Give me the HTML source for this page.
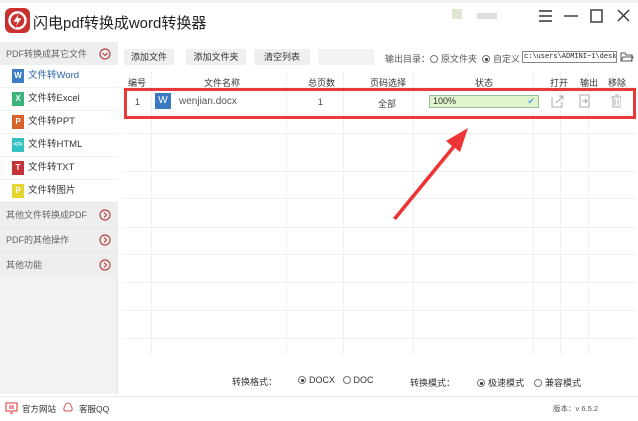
<!DOCTYPE html>
<html><head><meta charset="utf-8"><style>
*{margin:0;padding:0;box-sizing:border-box}
body{width:638px;height:421px;overflow:hidden;background:#fff;font-family:"Liberation Sans","Noto Sans CJK SC",sans-serif;font-size:9px;color:#444;position:relative}
.a{position:absolute}
.side{left:0;top:42px;width:118px;height:352px;background:#f2f2f2;border-right:1px solid #e4e4e4}
.it{position:absolute;left:0;width:118px;height:22px;line-height:22px;font-size:9.5px;color:#333}
.ic{position:absolute;left:12px;top:4px;width:12px;height:14px;color:#fff;font-size:8px;line-height:14px;text-align:center;font-weight:bold}
.sec{position:absolute;left:0;width:118px;height:25px;line-height:25px;padding-left:6px;color:#666;font-size:9px;background:#eee;border-top:1px solid #e6e6e6}
.chev{position:absolute;right:7px;top:6px}
.btn{position:absolute;top:49px;height:16px;line-height:16px;background:#efefef;border-radius:2px;font-size:9px;color:#333;text-align:center}
.vl{position:absolute;top:72px;width:1px;height:283px;background:#f0f0f0}
.hl{position:absolute;left:122px;width:514px;height:1px;background:#f0f0f0}
.th{position:absolute;top:76px;font-size:9px;color:#333}
.rad{display:inline-block;width:8px;height:8px;border:1px solid #777;border-radius:50%;vertical-align:-1px;margin-right:3px;position:relative}
.rad.on::after{content:"";position:absolute;left:1.5px;top:1.5px;width:3px;height:3px;background:#333;border-radius:50%}
</style></head><body>
<div class="a" style="left:0;top:0;width:638px;height:3px;background:#eef0f3"></div>
<!-- title -->
<div class="a" style="left:5px;top:8px;width:25px;height:25px;background:#c8312f;border-radius:6px"></div>
<svg class="a" style="left:5px;top:8px" width="25" height="25"><circle cx="12.5" cy="12.5" r="8" fill="none" stroke="#fff" stroke-width="2.4"/><path d="M14 5 L8 14 H12 L10 20 L17 10 H13 Z" fill="#fff" stroke="#c8312f" stroke-width=".6"/></svg>
<div class="a" style="left:33px;top:12px;font-size:15px;color:#222">闪电pdf转换成word转换器</div>
<div class="a" style="left:452px;top:9px;width:10px;height:10px;background:#dfe6cf"></div>
<div class="a" style="left:477px;top:13px;width:20px;height:6px;background:#ddd"></div>
<svg class="a" style="left:538px;top:8px" width="96" height="16" stroke="#333" stroke-width="1.4" fill="none"><path d="M1 3H14M1 8H14M1 13H14"/><path d="M26 8H40"/><rect x="53" y="2" width="11" height="12"/><path d="M80 2L91 13M91 2L80 13"/></svg>
<!-- sidebar -->
<div class="a side">
 <div class="sec" style="top:0;background:#eee;border:0;padding-left:6px">PDF转换成其它文件<svg class="chev" width="12" height="12" fill="none" stroke="#b44" stroke-width="1.2"><circle cx="6" cy="6" r="5"/><path d="M3.5 5L6 7.5L8.5 5"/></svg></div>
 <div class="it" style="top:23px;background:#fff"><span class="ic" style="background:#3d7fc4">W</span><span style="position:absolute;left:28px;color:#2a64ad">文件转Word</span></div>
 <div class="it" style="top:46px;background:#fff"><span class="ic" style="background:#3bb47b">X</span><span style="position:absolute;left:28px">文件转Excel</span></div>
 <div class="it" style="top:69px;background:#fff"><span class="ic" style="background:#d9622b">P</span><span style="position:absolute;left:28px">文件转PPT</span></div>
 <div class="it" style="top:92px;background:#fff"><span class="ic" style="background:#35c3c2;font-size:6px">&lt;/&gt;</span><span style="position:absolute;left:28px">文件转HTML</span></div>
 <div class="it" style="top:115px;background:#fff"><span class="ic" style="background:#c5333a">T</span><span style="position:absolute;left:28px">文件转TXT</span></div>
 <div class="it" style="top:138px;background:#fff"><span class="ic" style="background:#e4d532">P</span><span style="position:absolute;left:28px">文件转图片</span></div>
 <div class="sec" style="top:160px">其他文件转换成PDF<svg class="chev" width="12" height="12" fill="none" stroke="#b44" stroke-width="1.2"><circle cx="6" cy="6" r="5"/><path d="M5 3.5L7.5 6L5 8.5"/></svg></div>
 <div class="sec" style="top:185px">PDF的其他操作<svg class="chev" width="12" height="12" fill="none" stroke="#b44" stroke-width="1.2"><circle cx="6" cy="6" r="5"/><path d="M5 3.5L7.5 6L5 8.5"/></svg></div>
 <div class="sec" style="top:210px">其他功能<svg class="chev" width="12" height="12" fill="none" stroke="#b44" stroke-width="1.2"><circle cx="6" cy="6" r="5"/><path d="M5 3.5L7.5 6L5 8.5"/></svg></div>
</div>
<!-- toolbar -->
<div class="btn" style="left:124px;width:50px">添加文件</div>
<div class="btn" style="left:186px;width:60px">添加文件夹</div>
<div class="btn" style="left:254px;width:56px">清空列表</div>
<div class="btn" style="left:318px;width:56px;background:#f3f3f3"></div>
<div class="a" style="left:385px;top:52px;color:#555">输出目录：<span class="rad"></span>原文件夹&nbsp; <span class="rad on"></span>自定义</div>
<div class="a" style="left:522px;top:51px;width:95px;height:12px;border:1px solid #888;font-family:'Liberation Mono',monospace;font-size:7px;line-height:10px;padding-left:1px;color:#222;overflow:hidden;white-space:nowrap">c:\users\ADMINI~1\desktop</div>
<svg class="a" style="left:620px;top:51px" width="14" height="12" fill="none" stroke="#555"><path d="M1 2H5L6 4H12V10H1Z M1 10L3 6H13L11 10"/></svg>
<!-- grid -->
<div class="vl" style="left:151px"></div><div class="vl" style="left:286px"></div><div class="vl" style="left:343px"></div><div class="vl" style="left:413px"></div><div class="vl" style="left:533px"></div><div class="vl" style="left:560px"></div><div class="vl" style="left:588px"></div>
<div class="hl" style="top:87px"></div><div class="hl" style="top:133px"></div><div class="hl" style="top:171px"></div><div class="hl" style="top:198px"></div><div class="hl" style="top:227px"></div><div class="hl" style="top:254px"></div><div class="hl" style="top:282px"></div><div class="hl" style="top:310px"></div><div class="hl" style="top:338px"></div>
<div class="th" style="left:128px">编号</div><div class="th" style="left:204px">文件名称</div><div class="th" style="left:308px">总页数</div><div class="th" style="left:370px">页码选择</div><div class="th" style="left:475px">状态</div><div class="th" style="left:550px">打开</div><div class="th" style="left:580px">输出</div><div class="th" style="left:608px">移除</div>
<!-- row -->
<div class="a" style="left:135px;top:97px;font-size:9px">1</div>
<div class="a" style="left:155px;top:93px;width:16px;height:16px;background:#3a78c0;color:#fff;font-size:10px;line-height:16px;text-align:center">W</div>
<div class="a" style="left:179px;top:96px;font-size:10px;color:#555">wenjian.docx</div>
<div class="a" style="left:318px;top:97px">1</div>
<div class="a" style="left:378px;top:97px">全部</div>
<div class="a" style="left:429px;top:95px;width:110px;height:13px;background:#dff3cc;border:1px solid #9b9;font-size:9px;line-height:11px;padding-left:3px;color:#333">100%<span style="position:absolute;right:3px;color:#5a9bd5">✔</span></div>
<svg class="a" style="left:551px;top:94px" width="70" height="14" fill="none" stroke="#aaa"><path d="M1 3V13H11V8M5 9L12 2M8 2H12V6"/><rect x="29" y="1" width="9" height="12"/><path d="M31 7H36M34 5L36 7L34 9"/><rect x="62" y="3" width="8" height="10"/><path d="M60 3H72M64 1H68M64 5V11M67 5V11"/></svg>
<div class="a" style="left:124px;top:88px;width:512px;height:31px;border:3px solid #e83a3a"></div>
<svg class="a" style="left:380px;top:120px" width="95" height="105"><path d="M13 98 L72 26 L66 21 L88 8 L80 32 L75 28 L16 100 Z" fill="#ee3434"/></svg>
<!-- bottom options -->
<div class="a" style="left:232px;top:375px;color:#333">转换格式：</div>
<div class="a" style="left:298px;top:375px;color:#333"><span class="rad on"></span>DOCX&nbsp;&nbsp; <span class="rad"></span>DOC</div>
<div class="a" style="left:410px;top:376px;color:#333">转换模式：</div>
<div class="a" style="left:477px;top:376px;color:#333"><span class="rad on"></span>极速模式&nbsp;&nbsp;&nbsp; <span class="rad"></span>兼容模式</div>
<!-- footer -->
<div class="a" style="left:0;top:396px;width:638px;height:25px;background:#fff;border-top:1px solid #e8e8e8"></div>
<svg class="a" style="left:5px;top:402px" width="60" height="12" fill="none" stroke="#d33"><rect x="1" y="1" width="11" height="8"/><path d="M4 4H9M4 6H9M5 11H8"/></svg>
<div class="a" style="left:22px;top:403px;color:#333;font-size:8.5px">官方网站</div>
<svg class="a" style="left:62px;top:401px" width="12" height="13" fill="none" stroke="#d55"><path d="M3 10C1 9 2 6 3 5C3 1 9 1 9 5C10 6 11 9 9 10Z"/></svg>
<div class="a" style="left:79px;top:403px;color:#333;font-size:8.5px">客服QQ</div>
<div class="a" style="left:553px;top:403px;color:#555;font-size:7.5px">版本：v 6.5.2</div>
</body></html>
